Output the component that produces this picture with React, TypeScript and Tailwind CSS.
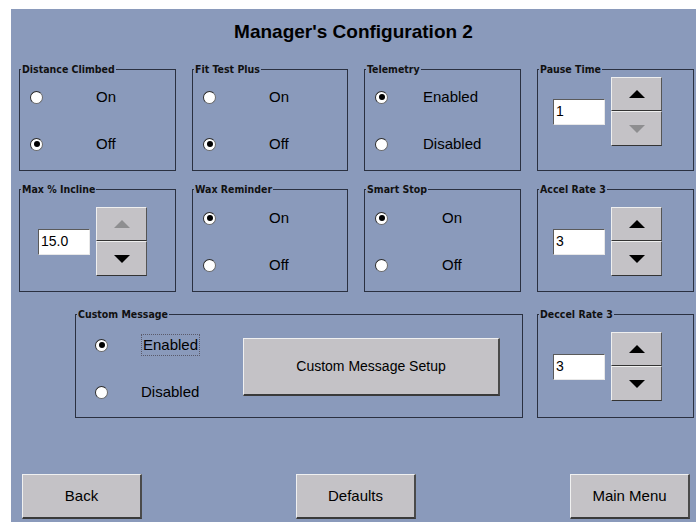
import React from 'react';

const FONT = { fontFamily: '"Liberation Sans", Arial, sans-serif' };
const LEGEND_FONT = { fontFamily: '"DejaVu Sans Condensed", "DejaVu Sans", Tahoma, sans-serif' };

const Radio: React.FC<{ checked?: boolean }> = ({ checked }) => (
  <span className="inline-flex h-[13px] w-[13px] shrink-0 items-center justify-center rounded-full border-[1.5px] border-t-[#2a2a2a] border-l-[#2a2a2a] border-b-[#6a6a6a] border-r-[#6a6a6a] bg-white">
    {checked && <span className="h-[6px] w-[6px] rounded-full bg-black" />}
  </span>
);

const Group: React.FC<{ title: string; className?: string; children?: React.ReactNode }> = ({
  title,
  className,
  children,
}) => (
  <fieldset className={'border border-[#2a3040] ' + (className ?? '')}>
    <legend className="ml-[1px] px-[1px] text-[10.5px] font-bold leading-[12px] text-[#111]" style={LEGEND_FONT}>
      {title}
    </legend>
    {children}
  </fieldset>
);

const Arrow: React.FC<{ up?: boolean; disabled?: boolean }> = ({ up, disabled }) => (
  <svg width="16" height="8" viewBox="0 0 16 8">
    <polygon points={up ? '0,8 8,0 16,8' : '0,0 16,0 8,8'} fill={disabled ? '#8e8e90' : '#000'} />
  </svg>
);

const Spinner: React.FC<{ value: string; upDisabled?: boolean; downDisabled?: boolean; className?: string }> = ({
  value,
  upDisabled,
  downDisabled,
  className,
}) => (
  <div className={'flex items-center ' + (className ?? '')}>
    <div
      className="flex h-[26px] w-[52px] items-center border border-t-[#5a5a5a] border-l-[#5a5a5a] border-b-[#e8e8e8] border-r-[#e8e8e8] bg-white pl-[2px] text-[14px] text-black"
      style={FONT}
    >
      {value}
    </div>
    <div className="ml-[6px] flex flex-col">
      <div className="flex h-[34px] w-[51px] items-center justify-center border border-t-[#efefef] border-l-[#efefef] border-b-[#333] border-r-[#555] bg-[#c4c2c6]">
        <Arrow up disabled={upDisabled} />
      </div>
      <div className="flex h-[35px] w-[51px] items-center justify-center border border-t-[#efefef] border-l-[#efefef] border-b-[#333] border-r-[#555] bg-[#c4c2c6]">
        <Arrow disabled={downDisabled} />
      </div>
    </div>
  </div>
);

const Option: React.FC<{ checked?: boolean; label: string; labelClass: string }> = ({ checked, label, labelClass }) => (
  <div className="flex h-[28px] items-center">
    <Radio checked={checked} />
    <span className={'text-[15px] text-black ' + labelClass} style={FONT}>
      {label}
    </span>
  </div>
);

const RadioGroup: React.FC<{
  title: string;
  options: [string, string];
  selected: 0 | 1;
  labelClass: string;
  top: string;
}> = ({ title, options, selected, labelClass, top }) => (
  <Group title={title} className="h-full">
    <div className={'flex flex-col gap-[19px] pl-[10px] ' + top}>
      <Option checked={selected === 0} label={options[0]} labelClass={labelClass} />
      <Option checked={selected === 1} label={options[1]} labelClass={labelClass} />
    </div>
  </Group>
);

const PanelButton: React.FC<{ label: string }> = ({ label }) => (
  <button
    className="flex h-[45px] w-[120px] items-center justify-center border border-t-[#f0f0f0] border-l-[#f0f0f0] border-b-2 border-r-2 border-b-[#3a3a3a] border-r-[#4a4a4a] bg-[#c4c2c6] text-[15px] text-black"
    style={FONT}
  >
    {label}
  </button>
);

export default function App() {
  return (
    <div className="min-h-[522px] w-[696px] bg-white pl-[11px] pt-[9px]">
      <div className="flex h-[513px] w-[685px] flex-col bg-[#8a9abb]">
        <div className="pt-[12px] text-center text-[19px] font-bold leading-[22px] text-black" style={FONT}>
          Manager's Configuration 2
        </div>

        <div className="mt-[20px] grid grid-cols-[157px_156px_157px_157px] gap-x-[16px] pl-[8px]">
          <div className="h-[108px]">
            <RadioGroup title="Distance Climbed" options={['On', 'Off']} selected={1} labelClass="ml-[53px]" top="mt-[8px]" />
          </div>
          <div className="h-[108px]">
            <RadioGroup title="Fit Test Plus" options={['On', 'Off']} selected={1} labelClass="ml-[53px]" top="mt-[8px]" />
          </div>
          <div className="h-[108px]">
            <RadioGroup
              title="Telemetry"
              options={['Enabled', 'Disabled']}
              selected={0}
              labelClass="ml-[35px]"
              top="mt-[8px]"
            />
          </div>
          <Group title="Pause Time" className="h-[108px]">
            <Spinner value="1" downDisabled className="mt-[2px] pl-[15px]" />
          </Group>

          <Group title="Max % Incline" className="mt-[12px] h-[109px]">
            <Spinner value="15.0" upDisabled className="mt-[12px] pl-[18px]" />
          </Group>
          <div className="mt-[12px] h-[109px]">
            <RadioGroup title="Wax Reminder" options={['On', 'Off']} selected={0} labelClass="ml-[53px]" top="mt-[9px]" />
          </div>
          <div className="mt-[12px] h-[109px]">
            <RadioGroup title="Smart Stop" options={['On', 'Off']} selected={0} labelClass="ml-[54px]" top="mt-[9px]" />
          </div>
          <Group title="Accel Rate 3" className="mt-[12px] h-[109px]">
            <Spinner value="3" className="mt-[12px] pl-[15px]" />
          </Group>

          <Group title="Custom Message" className="col-span-3 -mr-[2px] mt-[16px] ml-[56px] h-[110px]">
            <div className="flex">
              <div className="mt-[11px] flex w-[167px] flex-col gap-[19px] pl-[19px]">
                <div className="flex h-[28px] items-center">
                  <Radio checked />
                  <span
                    className="ml-[33px] border border-dotted border-[#5a5a6a] px-[1px] text-[15px] leading-[20px] text-black"
                    style={FONT}
                  >
                    Enabled
                  </span>
                </div>
                <div className="flex h-[28px] items-center">
                  <Radio />
                  <span className="ml-[33px] text-[15px] text-black" style={FONT}>
                    Disabled
                  </span>
                </div>
              </div>
              <button
                className="mt-[18px] flex h-[58px] w-[257px] items-center justify-center border border-t-[#f0f0f0] border-l-[#f0f0f0] border-b-2 border-r-2 border-b-[#3a3a3a] border-r-[#4a4a4a] bg-[#c4c2c6] text-[14px] text-black"
                style={FONT}
              >
                Custom Message Setup
              </button>
            </div>
          </Group>
          <Group title="Deccel Rate 3" className="mt-[16px] h-[110px]">
            <Spinner value="3" className="mt-[12px] pl-[15px]" />
          </Group>
        </div>

        <div className="mt-[56px] flex justify-between pl-[11px] pr-[6px]">
          <PanelButton label="Back" />
          <PanelButton label="Defaults" />
          <PanelButton label="Main Menu" />
        </div>
      </div>
    </div>
  );
}
